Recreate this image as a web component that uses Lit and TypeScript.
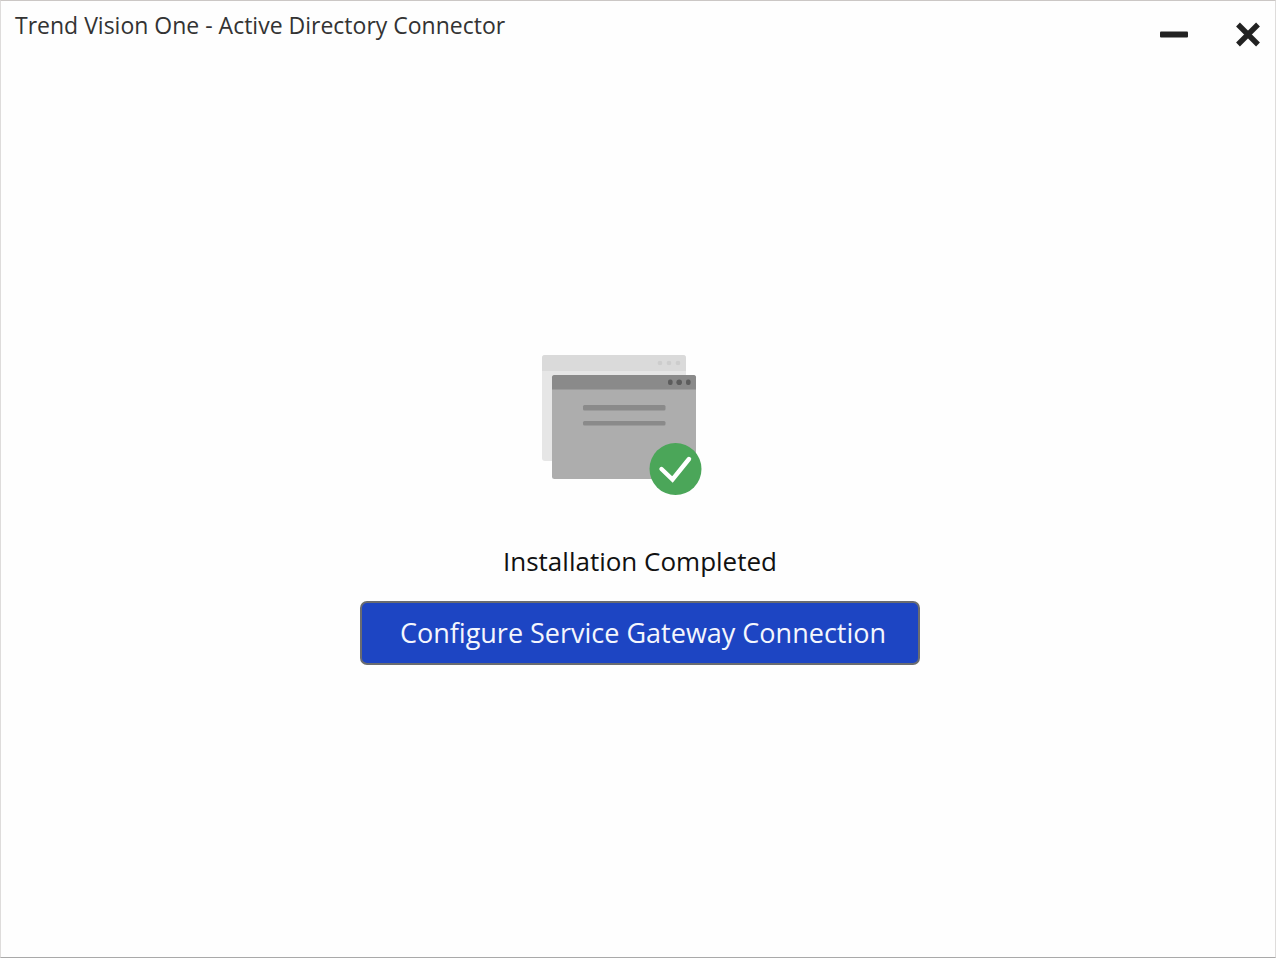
import { LitElement, html, css } from "lit";
import { customElement } from "lit/decorators.js";

@customElement("app-root")
export class AppRoot extends LitElement {
  static styles = css`
    :host {
      display: flex;
      flex-direction: column;
      box-sizing: border-box;
      min-height: 100vh;
      background: #fefefe;
      border: 1px solid #dedcdb;
      border-top-color: #cbc7c5;
      border-bottom-color: #a9a9a9;
      font-family: "Open Sans", "Noto Sans", sans-serif;
      color: #111;
    }
    .titlebar {
      display: flex;
      justify-content: space-between;
      align-items: flex-start;
      padding-left: 14px;
    }
    .title {
      margin: 0;
      padding-top: 8px;
      font-size: 23px;
      line-height: 32px;
      font-weight: 400;
      color: #333;
    }
    .controls {
      display: flex;
      gap: 20px;
    }
    .control {
      display: flex;
      align-items: center;
      justify-content: center;
      width: 54px;
      height: 62px;
      padding: 6px 0 0;
      border: 0;
      background: none;
    }
    .content {
      flex: 1;
      display: flex;
      flex-direction: column;
      align-items: center;
      justify-content: center;
      padding-left: 4px;
    }
    .art {
      display: block;
    }
    .message {
      margin: 48px 0 22px;
      font-size: 26px;
      line-height: 36px;
      color: #111;
    }
    .primary {
      box-sizing: border-box;
      width: 560px;
      max-width: 100%;
      height: 64px;
      padding: 0 0 0 6px;
      border: 2px solid #6a6c70;
      border-radius: 7px;
      background: #1d45c3;
      color: #f4f6fd;
      font-family: inherit;
      font-size: 27px;
      line-height: 36px;
    }
  `;

  render() {
    return html`
      <header class="titlebar">
        <h1 class="title">Trend Vision One - Active Directory Connector</h1>
        <div class="controls">
          <button class="control" type="button" aria-label="Minimize">
            <svg width="28" height="28" viewBox="0 0 28 28">
              <rect x="0" y="10.500" width="28" height="6" rx="1" fill="#222" />
            </svg>
          </button>
          <button class="control" type="button" aria-label="Close">
            <svg width="28" height="28" viewBox="0 0 28 28">
              <path d="M4 3.500 24 23.500M24 3.500 4 23.500" stroke="#222" stroke-width="5.400" />
            </svg>
          </button>
        </div>
      </header>
      <main class="content">
        <svg class="art" width="196" height="140" viewBox="0 0 196 140" aria-hidden="true">
          <rect x="0" y="0" width="144" height="106" rx="3" fill="#e6e6e6" />
          <path d="M0 16V3a3 3 0 0 1 3-3h138a3 3 0 0 1 3 3v13z" fill="#dadada" />
          <g fill="#cdcdcd">
            <circle cx="118" cy="8" r="2.3" />
            <circle cx="127" cy="8" r="2.3" />
            <circle cx="136" cy="8" r="2.3" />
          </g>
          <rect x="10" y="20" width="144" height="104" rx="2.5" fill="#adadad" />
          <path d="M10 34.500V22.500a2.500 2.500 0 0 1 2.500-2.500h139a2.500 2.500 0 0 1 2.500 2.500v12z" fill="#8a8a8a" />
          <g fill="#5c5c5c">
            <rect x="126" y="24.500" width="4.600" height="5.600" rx="2" />
            <circle cx="137.200" cy="27.300" r="2.800" />
            <rect x="144" y="24.500" width="4.600" height="5.600" rx="2" />
          </g>
          <rect x="41" y="50" width="82.500" height="5.600" rx="1.500" fill="#8a8a8a" />
          <rect x="41" y="66" width="82.500" height="4.600" rx="1.500" fill="#8a8a8a" />
          <circle cx="133.500" cy="114" r="26" fill="#4ba659" />
          <path d="M119.500 114 130.500 124.500 147 104" fill="none" stroke="#fff" stroke-width="4.400" stroke-linecap="round" />
        </svg>
        <p class="message">Installation Completed</p>
        <button class="primary" type="button">Configure Service Gateway Connection</button>
      </main>
    `;
  }
}
